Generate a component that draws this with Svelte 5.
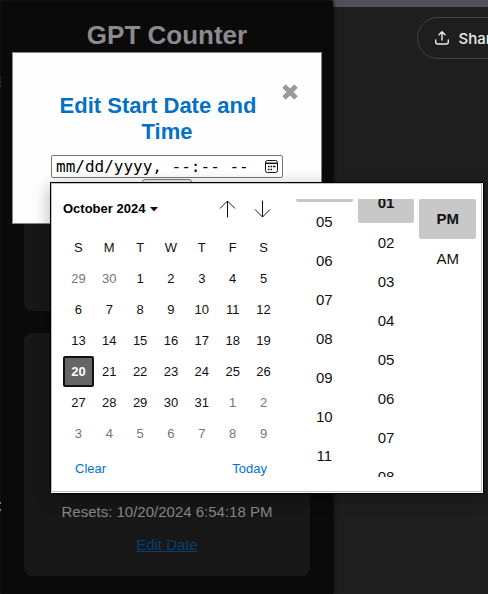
<script>
  const weekdays = ['S', 'M', 'T', 'W', 'T', 'F', 'S'];
  const month = { before: [29, 30], length: 31, after: 9 };
  const cells = [
    ...month.before.map((n) => ({ n, outside: true })),
    ...Array.from({ length: month.length }, (_, i) => ({ n: i + 1, outside: false })),
    ...Array.from({ length: month.after }, (_, i) => ({ n: i + 1, outside: true }))
  ];
  const weeks = Array.from({ length: 6 }, (_, w) => cells.slice(w * 7, w * 7 + 7));

  let selectedDay = $state(20);
  let value = $state('mm/dd/yyyy, --:-- --');

  const columns = [
    { label: 'Hours', scroll: 37, items: ['04', '05', '06', '07', '08', '09', '10', '11'] },
    { label: 'Minutes', scroll: 16, items: ['01', '02', '03', '04', '05', '06', '07', '08'] },
    { label: 'Period', scroll: 0, items: ['PM', 'AM'] }
  ];
</script>

<div class="page">
  <span class="sliver green"></span>
  <span class="sliver light"></span>
  <section class="panel">
    <h1>GPT Counter</h1>
    <div class="card"></div>
    <div class="card">
      <p>Resets: 10/20/2024 6:54:18 PM</p>
      <a href="#edit">Edit Date</a>
    </div>

    <div class="modal" role="dialog" aria-labelledby="modal-title">
      <button class="close" aria-label="Close">
        <svg width="18" height="18" viewBox="0 0 18 18"><path d="M3 3 15 15M15 3 3 15" stroke="#9b9b9b" stroke-width="5" /></svg>
      </button>
      <h2 id="modal-title">Edit Start Date and Time</h2>
      <div class="field">
        <input type="text" aria-label="Start date and time" bind:value />
        <svg width="13" height="13" viewBox="0 0 13 13" fill="none" stroke="#111">
          <rect x=".5" y=".5" width="12" height="12" rx="2" />
          <path d="M1 2.500h11" stroke="#999" />
          <path d="M.5 3.500h12" />
          <path d="M3 6.500h1.500M5.500 6.500H7M8 6.500h2.500M3 9.500h1.500M5.500 9.500H7" stroke-width="1.600" />
        </svg>
      </div>
      <button class="save" aria-label="Save"></button>
    </div>
  </section>

  <header>
    <button class="share">
      <svg width="16" height="16" viewBox="0 0 16 16" fill="none" stroke="#ececec" stroke-width="1.400" stroke-linecap="round" stroke-linejoin="round">
        <path d="M8 10V2M5 4.800 8 1.800l3 3M1.700 10v2q0 2 2 2h8.600q2 0 2-2v-2" />
      </svg>
      Share
    </button>
  </header>

  <div class="picker">
    <div class="inner">
      <div class="calendar">
        <div class="bar">
          <button class="month">October 2024
            <svg width="8" height="5" viewBox="0 0 8 5"><path d="M0 0h8L4 4.500z" fill="#111" /></svg>
          </button>
          <div class="arrows">
            <button aria-label="Previous month">
              <svg width="18" height="18" viewBox="0 0 18 18"><path d="M8.500 17.500V1M1 8.500 8.500 1 16 8.500" /></svg>
            </button>
            <button aria-label="Next month">
              <svg width="18" height="18" viewBox="0 0 18 18"><path d="M8.500 .5V17M1 9.500 8.500 17 16 9.500" /></svg>
            </button>
          </div>
        </div>
        <table>
          <thead>
            <tr>{#each weekdays as d}<th scope="col">{d}</th>{/each}</tr>
          </thead>
          <tbody>
            {#each weeks as week}
              <tr>
                {#each week as c}
                  <td>
                    <button
                      class:outside={c.outside}
                      class:selected={!c.outside && c.n === selectedDay}
                      onclick={() => { if (!c.outside) selectedDay = c.n; }}>{c.n}</button>
                  </td>
                {/each}
              </tr>
            {/each}
          </tbody>
        </table>
        <div class="actions">
          <button>Clear</button>
          <button>Today</button>
        </div>
      </div>
      <div class="times">
        {#each columns as col}
          <div class="column" role="group" aria-label={col.label}>
            <div class="track" style="margin-top: {-col.scroll}px">
              {#each col.items as item, i}
                <button class:chosen={i === 0}>{item}</button>
              {/each}
            </div>
          </div>
        {/each}
      </div>
    </div>
  </div>
</div>

<style>
  :global(body) { background: #1e1e1e; }
  .page, .page * { box-sizing: border-box; }
  .page {
    position: relative;
    display: flex;
    min-height: 100vh;
    overflow: hidden;
    padding: 1px 0 0 1px;
    font-family: "Liberation Sans", Arial, sans-serif;
    background: #1e1e1e;
  }
  button { font: inherit; color: inherit; background: none; border: 0; padding: 0; margin: 0; }
  svg { display: block; flex: none; }

  .sliver { position: absolute; left: 0; width: 1px; height: 10px; }
  .green { top: 77px; background: repeating-linear-gradient(#0c7a58 0 2px, #1e1e1e 2px 4px); }
  .light { top: 502px; background: linear-gradient(#ddd 0 2px, #1e1e1e 2px 7px, #ddd 7px 9px, #1e1e1e 9px); }

  .panel {
    position: relative;
    flex: 0 0 332px;
    display: flex;
    flex-direction: column;
    gap: 22px;
    padding: 19px 23px 17px;
    background: #0a0a0a;
    box-shadow: 0 0 4px #000;
    text-align: center;
  }
  h1 { margin: 0; font-size: 26px; line-height: 30px; color: #8b8b8f; }
  .card {
    display: flex;
    flex-direction: column;
    justify-content: flex-end;
    align-items: center;
    gap: 15px;
    height: 243px;
    padding-bottom: 22px;
    border-radius: 8px;
    background: #171717;
    font-size: 15px;
    line-height: 18px;
  }
  .card:first-of-type { height: 239px; }
  .card p { margin: 0; color: #86868a; }
  .card a { color: #04406f; }

  .modal {
    position: absolute;
    top: 51px;
    left: 11px;
    right: 11px;
    height: 172px;
    padding: 30px 38px 0;
    background: #fefefe;
    border: 1px solid #888;
  }
  h2 { margin: 10px 0; font-size: 22px; line-height: 26px; color: #0471c4; }
  .close { float: right; width: 34px; margin-right: -16px; }
  .close svg { margin-left: auto; }
  .field {
    display: flex;
    align-items: center;
    height: 23px;
    padding: 0 4px;
    border: 1px solid #767676;
    border-radius: 2px;
    background: #fff;
  }
  .field input {
    flex: 1;
    min-width: 0;
    padding: 0;
    border: 0;
    outline: 0;
    background: none;
    color: #000;
    font: 16px "DejaVu Sans Mono", monospace;
  }
  .save { display: block; width: 50px; height: 22px; margin: 1px auto 0; border: 1px solid #767676; border-radius: 3px; background: #efefef; }

  header {
    flex: 1;
    display: flex;
    justify-content: flex-end;
    align-items: flex-start;
    min-width: 0;
    margin-top: -1px;
    padding-top: 10px;
    border-top: 7px solid #505156;
  }
  .share {
    flex: none;
    display: flex;
    align-items: center;
    gap: 8px;
    height: 42px;
    margin-right: -29px;
    padding: 0 16px;
    border: 1px solid #424242;
    border-radius: 21px;
    color: #ececec;
    font: 500 15px Inter, sans-serif;
  }

  .picker {
    position: absolute;
    top: 182px;
    left: 50px;
    width: 434px;
    padding: 0 1px 1px 0;
    border: 1px solid #000;
    background: #fff;
    box-shadow: 0 4px 16px rgba(0, 0, 0, 0.3);
    color: #111;
  }
  .inner { display: flex; gap: 17px; padding: 15px 5px 14px 11px; border: 1px solid #c1c1c1; }
  .calendar { flex: 0 0 216px; font-size: 13px; line-height: 16px; }
  .bar { display: flex; justify-content: space-between; align-items: center; height: 20px; }
  .month { display: flex; align-items: center; gap: 5px; font-weight: 700; color: #000; }
  .arrows { display: flex; gap: 17px; padding-right: 7px; }
  .arrows path { fill: none; stroke: #111; stroke-width: 1; }
  table { width: 100%; margin-top: 13px; border-collapse: collapse; table-layout: fixed; }
  th { height: 31px; padding: 0; font-weight: 400; }
  td { height: 31px; padding: 0; }
  td button { display: block; width: 100%; height: 31px; }
  .outside { color: #757575; }
  td .selected { border: 2px solid #111; border-radius: 2px; background: #666; color: #fff; font-weight: 700; }
  .actions { display: flex; justify-content: space-between; padding: 12px 12px 0; color: #0471cc; }

  .times { flex: 1; display: flex; gap: 5px; height: 278px; }
  .column { flex: 1; overflow: hidden; }
  .track { display: flex; flex-direction: column; font-size: 15px; line-height: 18px; }
  .track button { flex: none; height: 39px; }
  .track .chosen { height: 40px; border-radius: 2px; background: #c8c8c8; font-weight: 700; }
</style>
